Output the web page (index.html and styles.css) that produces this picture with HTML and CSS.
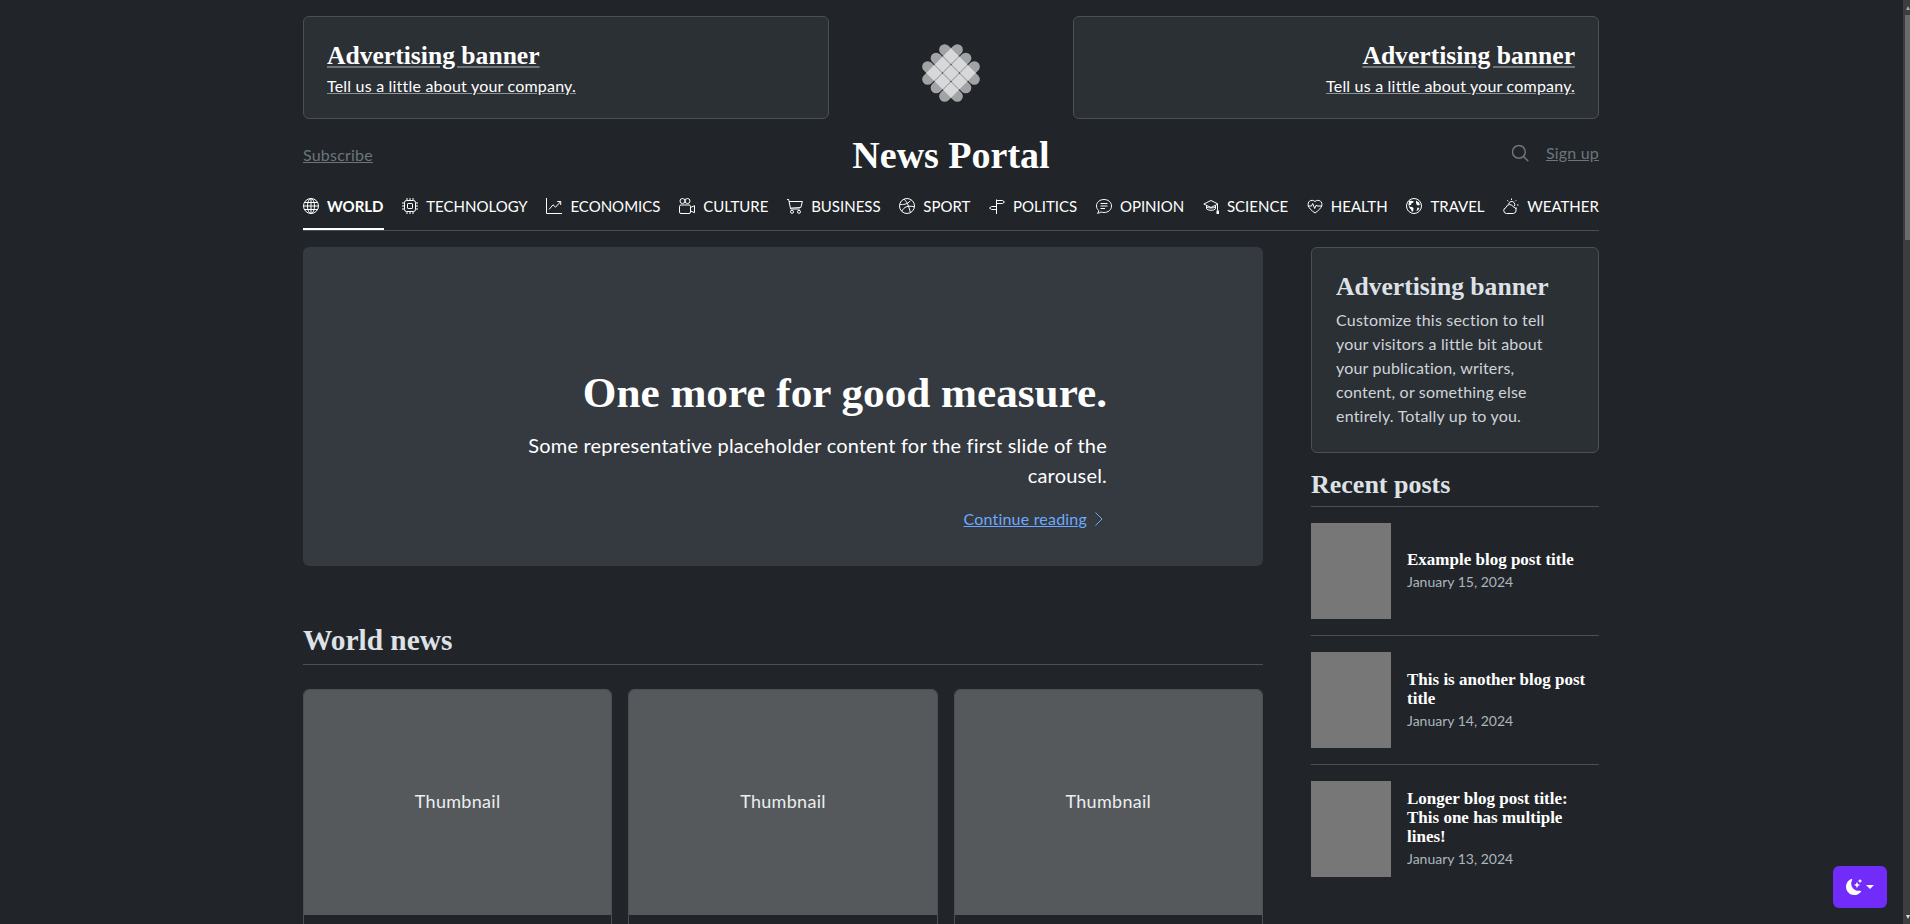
FILE: index.html
```html
<!DOCTYPE html>
<html lang="en">
<head>
  <meta charset="UTF-8">
  <meta name="viewport" content="width=device-width, initial-scale=1.0">
  <title>News Portal</title>
  <link rel="stylesheet" href="styles.css">
</head>
<body>

<div class="container">

  <div class="top-banners">
    <a class="banner" href="#">
      <span class="banner-title">Advertising banner</span>
      <span class="banner-text">Tell us a little about your company.</span>
    </a>
    <svg class="logo" viewBox="0 0 60 60" width="60" height="60">
      <g transform="rotate(45 30 30)" fill="#fff" fill-opacity="0.58">
        <rect x="3.5" y="12.5" width="53" height="11" rx="5.5"/>
        <rect x="3.5" y="24.5" width="53" height="11" rx="5.5"/>
        <rect x="3.5" y="36.5" width="53" height="11" rx="5.5"/>
        <rect x="12.5" y="3.5" width="11" height="53" rx="5.5"/>
        <rect x="24.5" y="3.5" width="11" height="53" rx="5.5"/>
        <rect x="36.5" y="3.5" width="11" height="53" rx="5.5"/>
      </g>
    </svg>
    <a class="banner banner-right" href="#">
      <span class="banner-title">Advertising banner</span>
      <span class="banner-text">Tell us a little about your company.</span>
    </a>
  </div>

  <div class="masthead">
    <div><a class="muted-link" href="#">Subscribe</a></div>
    <a class="site-title" href="#">News Portal</a>
    <div class="masthead-right">
      <svg class="search-icon" viewBox="0 0 24 24" width="18" height="18" fill="none" stroke="#6c757d" stroke-width="2"><circle cx="10.5" cy="10.5" r="8.5"/><path d="M16.8 16.8 23 23"/></svg>
      <a class="muted-link" href="#">Sign up</a>
    </div>
  </div>

  <nav class="topics">
    <a class="active" href="#">
      <svg class="ico" viewBox="0 0 16 16"><circle cx="8" cy="8" r="7.5"/><ellipse cx="8" cy="8" rx="3.5" ry="7.5"/><path d="M8 .5v15M.5 8h15M1.5 4.5h13M1.5 11.5h13"/></svg>
      World
    </a>
    <a href="#">
      <svg class="ico" viewBox="0 0 16 16"><rect x="2.5" y="2.5" width="11" height="11" rx="2"/><rect x="5.5" y="5.5" width="5" height="5" rx=".6"/><path d="M5 0v2.5M8 0v2.5M11 0v2.5M5 13.5V16M8 13.5V16M11 13.5V16M0 5h2.5M0 8h2.5M0 11h2.5M13.5 5H16M13.5 8H16M13.5 11H16"/></svg>
      Technology
    </a>
    <a href="#">
      <svg class="ico" viewBox="0 0 16 16"><path d="M.5 0v15.500H16"/><path d="M3 11.500 7 6.800l2.600 2.400 5-5.700M11.200 3.500h3.500V7"/></svg>
      Economics
    </a>
    <a href="#">
      <svg class="ico" viewBox="0 0 16 16"><circle cx="3.500" cy="3" r="2.500"/><circle cx="8.500" cy="3" r="2.500"/><rect x=".5" y="7" width="11" height="8.500" rx="1.500"/><path d="m11.500 9.500 4-1.800v7l-4-1.800"/></svg>
      Culture
    </a>
    <a href="#">
      <svg class="ico" viewBox="0 0 16 16"><path d="M0 1.500h1.600l.5 2 1.500 7.500h9.200M2.100 3.500h13.300l-1.600 6-10 .6"/><circle cx="5" cy="13.800" r="1.500"/><circle cx="12" cy="13.800" r="1.500"/></svg>
      Business
    </a>
    <a href="#">
      <svg class="ico" viewBox="0 0 16 16"><circle cx="8" cy="8" r="7.500"/><path d="M5.200 1.200C7.500 3.800 10 7.500 11.300 14.700M1 6.400c3 .4 7.200.2 10.600-3.800M2.800 13.200C5 8.800 9 7.200 15.300 8.800"/></svg>
      Sport
    </a>
    <a href="#">
      <svg class="ico" viewBox="0 0 16 16"><path d="M7.500 16V1.500M7.500 2.500h6l2 1.500-2 1.500h-6M7.500 8.500h-5L.5 10l2 1.500h5"/></svg>
      Politics
    </a>
    <a href="#">
      <svg class="ico" viewBox="0 0 16 16"><path d="M2.700 12.500C1.400 11.300.5 9.700.5 8c0-3.900 3.400-6.500 7.500-6.500s7.500 2.600 7.500 6.500-3.400 6.500-7.500 6.500c-1 0-2-.2-2.900-.5-.8.500-2 1-3.600 1.300.7-.8 1.100-1.600 1.200-2.300Z"/><path d="M4.500 5.500h7M4.500 8h7M4.500 10.500h4.500"/></svg>
      Opinion
    </a>
    <a href="#">
      <svg class="ico" viewBox="0 0 16 16"><path d="M8 2.500.8 6 8 9.500 15 6 8 2.500ZM3.500 7.500v3.300c1.400 2 7.600 2 9 0V7.500M14.500 6.500v6"/><path d="M3.500 9c2 1.300 7 1.300 9 0"/><rect x="14" y="13" width="1.500" height="2.500" fill="#fff"/></svg>
      Science
    </a>
    <a href="#">
      <svg class="ico" viewBox="0 0 16 16"><path d="M8 15C-5 6.500 3.500-.5 8 3.500c4.500-4 13 3 0 11.500Z"/><path d="M.8 8h3.700l1.200-2.500 2 5 1.600-3.500.7 1h5.200"/></svg>
      Health
    </a>
    <a href="#">
      <svg class="ico" viewBox="0 0 16 16"><circle cx="8" cy="8" r="7.500"/><path class="ico-fill" d="M3 3c1.500-.5 3-.5 4.800.2l-.8 1.500-1.500.5-.5 1.800-1.800 0 .6 1.800 2.400.2 1.300 1.300-.3 2.500-1.200 1.300-1-2.500-1.500-1.500-1-3ZM10 2.500l3 2 1 2.500-2 .5-1.500-1-.5-2Zm1.500 7 2 .5-1.500 2.500-1.500.5Z"/></svg>
      Travel
    </a>
    <a href="#">
      <svg class="ico" viewBox="0 0 16 16"><path d="M3.500 15.500a3 3 0 0 1-.5-5.900 3.800 3.800 0 0 1 7.200-.8 3.400 3.400 0 0 1 .3 6.700Z"/><path d="M5.700 6.200a3 3 0 0 1 5.500-1.400 3 3 0 0 1 .3 3.200M8.500.5v1.500M13.200 2.300l-1 1M15.500 7h-1.500M14 10.500l-1-.7M4.300 2.300l1 1"/></svg>
      Weather
    </a>
  </nav>

  <div class="content">
    <main class="main-col">
      <section class="hero">
        <div class="hero-caption">
          <h1>One more for good measure.</h1>
          <p>Some representative placeholder content for the first slide of the carousel.</p>
          <div class="hero-link">
            <a href="#">Continue reading</a>
            <svg class="chevron" viewBox="0 0 16 16" width="16" height="16" fill="none" stroke="#6ea8fe"><path d="m4.500 1.500 6.500 6.500-6.500 6.500"/></svg>
          </div>
        </div>
      </section>

      <h2 class="section-title">World news</h2>
      <div class="cards">
        <div class="card"><div class="thumb">Thumbnail</div><div class="card-body"></div></div>
        <div class="card"><div class="thumb">Thumbnail</div><div class="card-body"></div></div>
        <div class="card"><div class="thumb">Thumbnail</div><div class="card-body"></div></div>
      </div>
    </main>

    <aside class="side-col">
      <div class="side-ad">
        <h3>Advertising banner</h3>
        <p>Customize this section to tell<br>your visitors a little bit about<br>your publication, writers,<br>content, or something else<br>entirely. Totally up to you.</p>
      </div>

      <h3 class="side-title">Recent posts</h3>
      <ul class="posts">
        <li>
          <div class="post-img"></div>
          <div>
            <h4>Example blog post title</h4>
            <small>January 15, 2024</small>
          </div>
        </li>
        <li>
          <div class="post-img"></div>
          <div>
            <h4>This is another blog post title</h4>
            <small>January 14, 2024</small>
          </div>
        </li>
        <li>
          <div class="post-img"></div>
          <div>
            <h4>Longer blog post title: This one has multiple lines!</h4>
            <small>January 13, 2024</small>
          </div>
        </li>
      </ul>
    </aside>
  </div>

</div>

<button class="theme-btn" type="button">
  <svg viewBox="0 0 16 16" width="16" height="16" fill="#fff"><path d="M6 .278a.768.768 0 0 1 .08.858 7.208 7.208 0 0 0-.878 3.46c0 4.021 3.278 7.277 7.318 7.277.527 0 1.04-.055 1.533-.16a.787.787 0 0 1 .81.316.733.733 0 0 1-.031.893A8.349 8.349 0 0 1 8.344 16C3.734 16 0 12.286 0 7.71 0 4.266 2.114 1.312 5.124.06A.752.752 0 0 1 6 .278z"/><path d="M10.794 3.148a.217.217 0 0 1 .412 0l.387 1.162c.173.518.579.924 1.097 1.097l1.162.387a.217.217 0 0 1 0 .412l-1.162.387a1.734 1.734 0 0 0-1.097 1.097l-.387 1.162a.217.217 0 0 1-.412 0l-.387-1.162A1.734 1.734 0 0 0 9.31 6.593l-1.162-.387a.217.217 0 0 1 0-.412l1.162-.387a1.734 1.734 0 0 0 1.097-1.097l.387-1.162zM13.863.099a.145.145 0 0 1 .274 0l.258.774c.115.346.386.617.732.732l.774.258a.145.145 0 0 1 0 .274l-.774.258a1.156 1.156 0 0 0-.732.732l-.258.774a.145.145 0 0 1-.274 0l-.258-.774a1.156 1.156 0 0 0-.732-.732l-.774-.258a.145.145 0 0 1 0-.274l.774-.258c.346-.115.617-.386.732-.732L13.863.1z"/></svg>
  <span class="caret"></span>
</button>

<div class="scrollbar">
  <span class="arrow-up"></span>
  <span class="scroll-thumb"></span>
  <span class="arrow-down"></span>
</div>

</body>
</html>
```

FILE: styles.css
```css
html {
  background-color: #212529;
}
body {
  margin: 0;
  padding-right: 8px;
  font-family: Lato, "Open Sans", sans-serif;
  font-size: 16px;
  letter-spacing: 0.2px;
  line-height: 24px;
  background-color: #212529;
  color: #dee2e6;
}
a {
  color: inherit;
}
h1, h2, h3, h4, p, ul {
  margin: 0;
  padding: 0;
}
h1, h2, h3, h4 {
  font-family: "Liberation Serif", serif;
  font-weight: 700;
  letter-spacing: 0;
}
.container {
  width: 1296px;
  min-height: 3670px;
  margin: 0 auto;
  padding-top: 16px;
}

/* top banners */
.top-banners {
  display: grid;
  grid-template-columns: 526px 1fr 526px;
  align-items: start;
}
.banner {
  display: block;
  box-sizing: border-box;
  height: 103px;
  padding: 24px 23px 20px;
  background-color: #2b3035;
  border: 1px solid #495057;
  border-radius: 6px;
  color: #fff;
  text-decoration: none;
}
.banner-right {
  text-align: right;
}
.banner-title {
  display: block;
  margin-bottom: 4px;
  font-family: "Liberation Serif", serif;
  font-size: 25.6px;
  font-weight: 700;
  letter-spacing: 0;
  line-height: 29px;
  text-decoration: underline;
  text-decoration-color: #6c757d;
}
.banner-text {
  display: block;
  text-decoration: underline;
  text-decoration-color: #8b9299;
}
.logo {
  justify-self: center;
  margin-top: 27px;
}

/* masthead */
.masthead {
  display: grid;
  grid-template-columns: 1fr auto 1fr;
  align-items: center;
  padding: 12px 0 15px;
}
.muted-link {
  color: #6c757d;
}
.site-title {
  font-family: "Liberation Serif", serif;
  font-size: 38px;
  font-weight: 700;
  letter-spacing: 0;
  line-height: 48px;
  color: #fff;
  text-decoration: none;
}
.masthead-right {
  display: flex;
  align-items: center;
  justify-content: flex-end;
  gap: 17px;
  margin-top: -4px;
}

/* topic nav */
.topics {
  display: flex;
  justify-content: space-between;
  border-bottom: 1px solid #495057;
}
.topics a {
  display: flex;
  align-items: center;
  gap: 8px;
  padding-bottom: 10px;
  border-bottom: 2px solid transparent;
  color: #fff;
  font-size: 15px;
  letter-spacing: 0;
  text-decoration: none;
  text-transform: uppercase;
}
.topics a.active {
  border-bottom-color: #fff;
  font-weight: 700;
}
.ico {
  width: 16px;
  height: 16px;
  flex: none;
  fill: none;
  stroke: #fff;
  stroke-width: 1;
}
.ico-fill {
  fill: #fff;
  stroke: none;
}

/* main layout */
.content {
  display: flex;
  gap: 48px;
  padding-top: 16px;
}
.main-col {
  width: 960px;
}
.side-col {
  width: 288px;
}

.hero {
  box-sizing: border-box;
  display: flex;
  justify-content: flex-end;
  align-items: flex-end;
  height: 319px;
  padding: 0 156px 35px 0;
  background-color: #343a40;
  border-radius: 6px;
  color: #fff;
  text-align: right;
}
.hero-caption {
  width: 620px;
}
.hero h1 {
  font-size: 43.2px;
  line-height: 53px;
  margin-bottom: 11px;
}
.hero p {
  font-size: 20px;
  line-height: 30px;
  margin-bottom: 17px;
}
.hero-link {
  display: flex;
  justify-content: flex-end;
  align-items: center;
  gap: 4px;
  color: #6ea8fe;
}

.section-title {
  margin-top: 57px;
  padding-bottom: 7px;
  border-bottom: 1px solid #495057;
  font-size: 29.4px;
  line-height: 34px;
  color: #dee2e6;
}
.cards {
  display: grid;
  grid-template-columns: repeat(3, 1fr);
  gap: 16px;
  margin-top: 24px;
}
.card {
  border: 1px solid #495057;
  border-radius: 6px;
  overflow: hidden;
}
.thumb {
  box-sizing: border-box;
  display: flex;
  align-items: center;
  justify-content: center;
  height: 225px;
  padding-bottom: 3px;
  background-color: #55595c;
  color: #eceeef;
  font-size: 18px;
  letter-spacing: 0.3px;
}
.card-body {
  height: 200px;
}

/* sidebar */
.side-ad {
  box-sizing: border-box;
  height: 206px;
  padding: 24px;
  background-color: #2b3035;
  border: 1px solid #495057;
  border-radius: 6px;
}
.side-ad h3 {
  margin-bottom: 7px;
  font-size: 25.6px;
  line-height: 29px;
}
.side-ad p {
  color: #cfd4d9;
}
.side-title {
  margin-top: 17px;
  padding-bottom: 7px;
  border-bottom: 1px solid #495057;
  font-size: 26px;
  line-height: 29px;
}
.posts {
  list-style: none;
}
.posts li {
  display: flex;
  align-items: center;
  gap: 16px;
  padding: 16px 0;
  border-top: 1px solid #495057;
}
.posts li:first-child {
  border-top: none;
}
.post-img {
  width: 80px;
  height: 96px;
  flex: none;
  background-color: #777;
}
.posts h4 {
  font-size: 17px;
  line-height: 19px;
  color: #fff;
}
.posts small {
  display: block;
  margin-top: 2px;
  font-size: 14px;
  letter-spacing: 0;
  line-height: 21px;
  color: #adb5bd;
}

/* theme button */
.theme-btn {
  position: fixed;
  right: 23px;
  bottom: 16px;
  display: flex;
  align-items: center;
  justify-content: center;
  gap: 4px;
  width: 54px;
  height: 42px;
  padding: 0;
  background-color: #712cf9;
  border: none;
  border-radius: 6px;
}
.caret {
  width: 0;
  height: 0;
  border-top: 4px solid #fff;
  border-left: 4px solid transparent;
  border-right: 4px solid transparent;
}

/* thin window scrollbar */
.scrollbar {
  position: fixed;
  top: 0;
  right: 0;
  bottom: 0;
  display: flex;
  flex-direction: column;
  align-items: flex-end;
  width: 7px;
  background-color: #3d3d3d;
}
.arrow-up,
.arrow-down {
  width: 0;
  height: 0;
  margin: 6px 0 5px;
  border-left: 2px solid transparent;
  border-right: 2px solid transparent;
}
.arrow-up {
  border-bottom: 4px solid #a8a8a8;
}
.arrow-down {
  margin-top: auto;
  border-top: 4px solid #e0e0e0;
}
.scroll-thumb {
  width: 5px;
  height: 225px;
  background-color: #6b6b6b;
}
```
